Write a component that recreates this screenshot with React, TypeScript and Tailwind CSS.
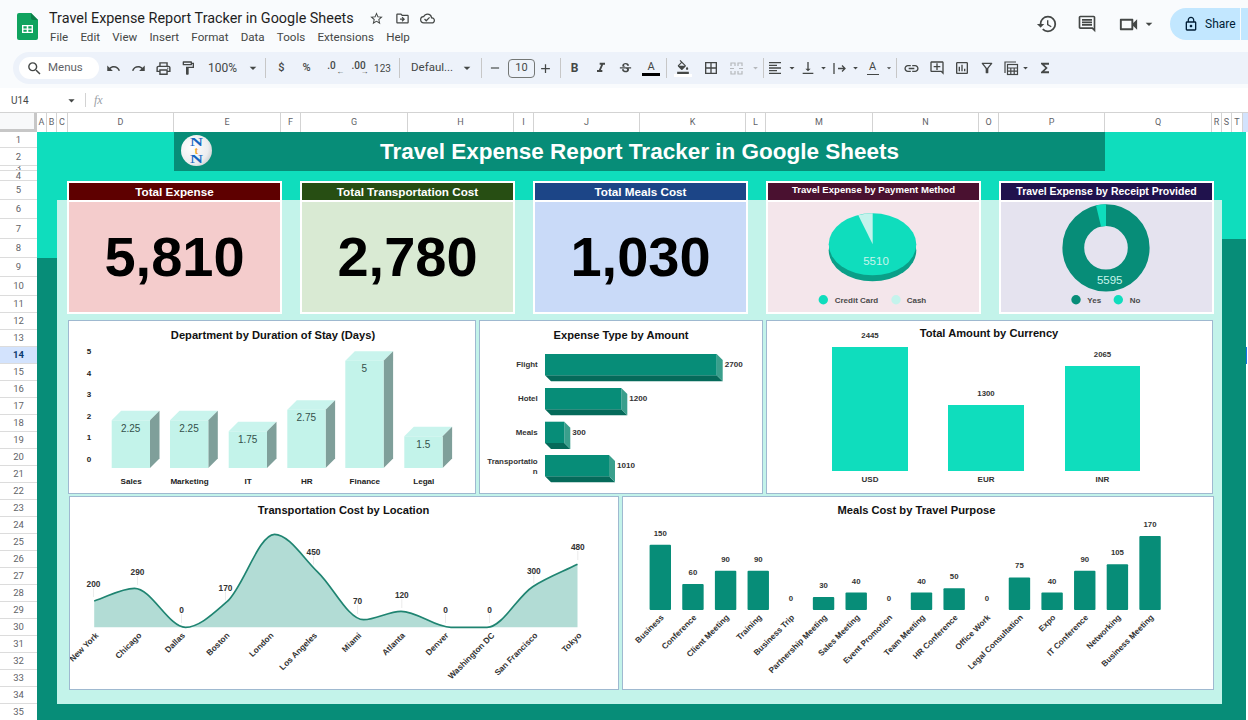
import React from 'react';
import {
  MdStarBorder, MdOutlineDriveFileMove, MdOutlineCloudDone, MdHistory, MdOutlineComment, MdOutlineVideocam,
  MdArrowDropDown, MdLockOutline, MdSearch, MdUndo, MdRedo, MdOutlinePrint, MdOutlineFormatPaint, MdRemove, MdAdd,
  MdFormatItalic, MdStrikethroughS, MdOutlineFormatColorFill, MdBorderAll, MdFormatAlignLeft, MdVerticalAlignBottom,
  MdLink, MdOutlineAddComment, MdOutlineInsertChart, MdOutlineFilterAlt, MdFunctions,
} from 'react-icons/md';

const MENUS = ['File', 'Edit', 'View', 'Insert', 'Format', 'Data', 'Tools', 'Extensions', 'Help'];

const COLUMNS: [string, number][] = [
  ['A', 10], ['B', 10], ['C', 11], ['D', 106], ['E', 107], ['F', 20], ['G', 107], ['H', 106], ['I', 20], ['J', 106],
  ['K', 106], ['L', 20], ['M', 107], ['N', 106], ['O', 20], ['P', 106], ['Q', 107], ['R', 10], ['S', 10], ['T', 11],
];

const ROW_HEIGHTS = [16, 18, 5, 10, 19, 19, 20, 19, 19, 19, 17, ...Array(24).fill(17)];

const KPIS = [
  { title: 'Total Expense', value: '5,810', head: 'bg-[#5e0000]', body: 'bg-[#f4cccc]' },
  { title: 'Total Transportation Cost', value: '2,780', head: 'bg-[#274e13]', body: 'bg-[#d9ead3]' },
  { title: 'Total Meals Cost', value: '1,030', head: 'bg-[#1c4587]', body: 'bg-[#c9daf8]' },
];

const STAY = [
  { name: 'Sales', label: '2.25', x: 111.7, top: 420.3 },
  { name: 'Marketing', label: '2.25', x: 170, top: 420.3 },
  { name: 'IT', label: '1.75', x: 228.7, top: 431.3 },
  { name: 'HR', label: '2.75', x: 287.3, top: 409.7 },
  { name: 'Finance', label: '5', x: 345.3, top: 360.7 },
  { name: 'Legal', label: '1.5', x: 404.3, top: 436.3 },
];

const EXPENSES = [
  { name: ['Flight'], value: 2700, right: 716.7, y: 354 },
  { name: ['Hotel'], value: 1200, right: 621.3, y: 388 },
  { name: ['Meals'], value: 300, right: 564.3, y: 421.7 },
  { name: ['Transportatio', 'n'], value: 1010, right: 609, y: 455 },
];

const CURRENCY = [
  { name: 'USD', value: 2445, x: 832, w: 76, top: 347 },
  { name: 'EUR', value: 1300, x: 948, w: 76, top: 405 },
  { name: 'INR', value: 2065, x: 1065, w: 75, top: 366 },
];

const LOCATIONS: { name: string; end: number; x: number; y: number; label?: string; lx?: number; ly?: number }[] = [
  { name: 'New York', end: 99, x: 94.2, y: 601, label: '200', lx: 93.5, ly: 584 },
  { name: 'Chicago', end: 142, x: 134.5, y: 588.3, label: '290', lx: 137.5, ly: 572 },
  { name: 'Dallas', end: 185.5, x: 185.5, y: 627.3, label: '0', lx: 181.5, ly: 610 },
  { name: 'Boston', end: 230, x: 227, y: 601.7, label: '170', lx: 225.5, ly: 587.5 },
  { name: 'London', end: 274, x: 274.5, y: 534.3 },
  { name: 'Los Angeles', end: 317.5, x: 318, y: 572.3, label: '450', lx: 313.5, ly: 551.5 },
  { name: 'Miami', end: 362, x: 363.6, y: 619.7, label: '70', lx: 357.5, ly: 601 },
  { name: 'Atlanta', end: 405.5, x: 401, y: 611.3, label: '120', lx: 401.8, ly: 595 },
  { name: 'Denver', end: 449, x: 451, y: 627.3, label: '0', lx: 445.5, ly: 610 },
  { name: 'Washington DC', end: 495, x: 487, y: 627.3, label: '0', lx: 489.5, ly: 610 },
  { name: 'San Francisco', end: 538, x: 532.7, y: 586.7, label: '300', lx: 533.8, ly: 570.5 },
  { name: 'Tokyo', end: 582, x: 577.5, y: 564.3, label: '480', lx: 577.8, ly: 547 },
];

const PURPOSES: [string, number][] = [
  ['Business', 150], ['Conference', 60], ['Client Meeting', 90], ['Training', 90], ['Business Trip', 0],
  ['Partnership Meeting', 30], ['Sales Meeting', 40], ['Event Promotion', 0], ['Team Meeting', 40], ['HR Conference', 50],
  ['Office Work', 0], ['Legal Consultation', 75], ['Expo', 40], ['IT Conference', 90], ['Networking', 105], ['Business Meeting', 170],
];

// monotone cubic through the points, flat at every peak and dip
function smoothPath(pts: { x: number; y: number }[]) {
  const m = pts.map((p, i) => {
    const prev = pts[i - 1];
    const next = pts[i + 1];
    if (!prev) return (next.y - p.y) / (next.x - p.x);
    if (!next) return (p.y - prev.y) / (p.x - prev.x);
    const a = (p.y - prev.y) / (p.x - prev.x);
    const b = (next.y - p.y) / (next.x - p.x);
    return a * b <= 0 ? 0 : (2 * a * b) / (a + b);
  });
  let d = 'M' + pts[0].x + ' ' + pts[0].y;
  for (let i = 0; i < pts.length - 1; i++) {
    const h = (pts[i + 1].x - pts[i].x) / 3;
    d += ' C' + (pts[i].x + h) + ' ' + (pts[i].y + m[i] * h) + ' ' + (pts[i + 1].x - h) + ' ' + (pts[i + 1].y - m[i + 1] * h) + ' ' + pts[i + 1].x + ' ' + pts[i + 1].y;
  }
  return d;
}

const Tool: React.FC<{ w?: string; children: React.ReactNode }> = ({ w = 'w-[25px]', children }) => (
  <div className={w + ' h-full shrink-0 flex items-center justify-center text-[#444746]'}>{children}</div>
);

const Sep = () => <div className="w-px h-[20px] bg-[#c7c7c7] shrink-0" />;

const Caret = ({ muted = false }: { muted?: boolean }) => (
  <MdArrowDropDown size={16} className={muted ? 'text-[#b5b8bb]' : 'text-[#444746]'} />
);

const Toolbar = () => (
  <div className="h-[36px] bg-[#f9fbfd] pl-[13px] shrink-0">
    <div className="h-[32px] bg-[#edf2fa] rounded-l-[16px] flex items-center pl-[6px] text-[#444746]">
      <div className="w-[80px] h-[22px] bg-white rounded-full flex items-center pl-[7px] shrink-0">
        <MdSearch size={17} />
        <span className="ml-[5px] text-[11.5px] text-[#5f6368]">Menus</span>
      </div>
      <div className="w-[1.5px] shrink-0" />
      <Tool><MdUndo size={15} /></Tool>
      <Tool><MdRedo size={15} /></Tool>
      <Tool><MdOutlinePrint size={17} /></Tool>
      <Tool><MdOutlineFormatPaint size={16} /></Tool>
      <span className="ml-[7.5px] w-[36px] text-[12px] shrink-0">100%</span>
      <Tool w="w-[17px]"><Caret /></Tool>
      <div className="w-[4px] shrink-0" />
      <Sep />
      <Tool w="w-[31px]"><span className="text-[11px] font-medium">$</span></Tool>
      <Tool w="w-[19px]"><span className="text-[11px] font-medium">%</span></Tool>
      <Tool w="w-[31px]">
        <span className="relative text-[10px] font-medium leading-none -mt-[4px]">.0
          <span className="absolute left-[9px] top-[7px] text-[8px]">←</span>
        </span>
      </Tool>
      <Tool w="w-[23px]">
        <span className="relative text-[10px] font-medium leading-none -mt-[4px]">.00
          <span className="absolute left-[9px] top-[7px] text-[8px]">→</span>
        </span>
      </Tool>
      <Tool w="w-[25px]"><span className="text-[10px]">123</span></Tool>
      <div className="w-[4px] shrink-0" />
      <Sep />
      <span className="ml-[11px] w-[48px] text-[11.5px] shrink-0">Defaul...</span>
      <Tool w="w-[16px]"><Caret /></Tool>
      <div className="w-[6px] shrink-0" />
      <Sep />
      <Tool w="w-[26px]"><MdRemove size={14} /></Tool>
      <div className="w-[27px] h-[19px] rounded-[4px] border border-[#747775] flex items-center justify-center text-[11px] shrink-0">10</div>
      <Tool w="w-[21px]"><MdAdd size={15} /></Tool>
      <div className="w-[4px] shrink-0" />
      <Sep />
      <Tool w="w-[27px]"><span className="text-[12px] font-bold">B</span></Tool>
      <Tool w="w-[25px]"><MdFormatItalic size={16} /></Tool>
      <Tool w="w-[25px]"><MdStrikethroughS size={15} /></Tool>
      <Tool w="w-[26px]">
        <div className="flex flex-col items-center">
          <span className="text-[11px] leading-[11px]">A</span>
          <div className="w-[18px] h-[3px] bg-black mt-px" />
        </div>
      </Tool>
      <div className="w-[2px] shrink-0" />
      <Sep />
      <Tool w="w-[32px]">
        <div className="flex flex-col items-center">
          <MdOutlineFormatColorFill size={14} />
          <div className="w-[18px] h-[3px] bg-white" />
        </div>
      </Tool>
      <Tool w="w-[24px]"><MdBorderAll size={16} /></Tool>
      <Tool w="w-[27px]">
        <svg width="15" height="15" viewBox="0 0 15 15" fill="none" stroke="#b5b8bb" strokeWidth="1.2">
          <path d="M2 5V2h4v3M9 5V2h4v3M2 10v3h4v-3M9 10v3h4v-3M1 7.5h4M14 7.5h-4" />
        </svg>
      </Tool>
      <Tool w="w-[11px]"><Caret muted /></Tool>
      <div className="w-[2px] shrink-0" />
      <Sep />
      <Tool w="w-[22px]"><MdFormatAlignLeft size={16} /></Tool>
      <Tool w="w-[12px]"><Caret /></Tool>
      <Tool w="w-[20px]"><MdVerticalAlignBottom size={16} /></Tool>
      <Tool w="w-[11px]"><Caret /></Tool>
      <Tool w="w-[21px]">
        <svg width="15" height="15" viewBox="0 0 15 15" fill="none" stroke="#444746" strokeWidth="1.3">
          <path d="M2 2v11M6 7.5h7M10 4.5l3 3-3 3" />
        </svg>
      </Tool>
      <Tool w="w-[11px]"><Caret /></Tool>
      <Tool w="w-[23px]">
        <div className="flex flex-col items-center">
          <span className="text-[11px] leading-[11px]">A</span>
          <div className="w-[12px] h-px bg-[#444746] mt-[2px]" />
        </div>
      </Tool>
      <Tool w="w-[10px]"><Caret /></Tool>
      <div className="w-[2px] shrink-0" />
      <Sep />
      <Tool w="w-[28px]"><MdLink size={17} /></Tool>
      <Tool w="w-[24px]"><MdOutlineAddComment size={16} /></Tool>
      <Tool w="w-[25px]"><MdOutlineInsertChart size={16} /></Tool>
      <Tool w="w-[25px]"><MdOutlineFilterAlt size={16} /></Tool>
      <Tool w="w-[24px]">
        <svg width="16" height="16" viewBox="0 0 16 16" fill="none" stroke="#444746" strokeWidth="1.2">
          <path d="M2 13V2h11" />
          <rect x="4.5" y="4.5" width="10" height="10" />
          <path d="M4.5 8h10M4.5 11.2h10M7.8 8v6.5M11.2 8v6.5" />
        </svg>
      </Tool>
      <div className="-ml-[3.5px] w-[11px] h-full shrink-0 flex items-center justify-center"><Caret /></div>
      <Tool w="w-[29px]"><MdFunctions size={16} /></Tool>
    </div>
  </div>
);

const TopBar = () => (
  <div className="h-[52px] bg-[#f9fbfd] flex shrink-0 text-[#1f1f1f]">
    <svg className="ml-[17px] mt-[13px] shrink-0" width="21" height="27" viewBox="0 0 21 27">
      <path d="M2 0h12l7 7v18a2 2 0 0 1-2 2H2a2 2 0 0 1-2-2V2a2 2 0 0 1 2-2z" fill="#10a35f" />
      <path d="M14 0l7 7h-5a2 2 0 0 1-2-2z" fill="#0b7f49" />
      <path d="M5 12h11v8H5z" fill="#fff" />
      <path d="M6.4 13.3h3.3v2.1H6.4zM11.3 13.3h3.3v2.1h-3.3zM6.4 16.8h3.3v2h-3.3zM11.3 16.8h3.3v2h-3.3z" fill="#10a35f" />
    </svg>
    <div className="ml-[11px] pt-[9px]">
      <div className="flex items-center h-[19px]">
        <span className="text-[14.4px] w-[320px] whitespace-nowrap">Travel Expense Report Tracker in Google Sheets</span>
        <MdStarBorder size={15} className="text-[#444746]" />
        <MdOutlineDriveFileMove size={15} className="text-[#444746] ml-[11px]" />
        <MdOutlineCloudDone size={15} className="text-[#444746] ml-[10px]" />
      </div>
      <div className="flex gap-[12.2px] mt-[2px] ml-px text-[11.6px] leading-[15px] text-[#444746]">
        {MENUS.map(m => <span key={m}>{m}</span>)}
      </div>
    </div>
    <div className="ml-auto flex items-center h-[48px] text-[#444746]">
      <MdHistory size={22} />
      <MdOutlineComment size={20} className="ml-[19px]" />
      <MdOutlineVideocam size={23} className="ml-[20px]" />
      <MdArrowDropDown size={16} className="ml-[1px]" />
      <div className="ml-[13px] w-[78px] h-[32px] bg-[#c2e7ff] rounded-l-full flex items-center pl-[13px] text-[#001d35]">
        <MdLockOutline size={16} />
        <span className="ml-[6px] w-[35px] text-[12px]">Share</span>
        <div className="w-px h-full bg-[#f9fbfd]" />
      </div>
    </div>
  </div>
);

const FormulaBar = () => (
  <div className="h-[25px] bg-white border-b border-[#d3d3d3] flex items-center shrink-0 text-[#444746]">
    <span className="ml-[11px] w-[53px] text-[10px]">U14</span>
    <MdArrowDropDown size={15} />
    <div className="ml-[6px] w-px h-[14px] bg-[#d3d3d3]" />
    <span className="ml-[8px] text-[12px] italic font-['Liberation_Serif',serif] text-[#9aa0a6]">fx</span>
  </div>
);

const ColumnHeader = () => (
  <div className="h-[19px] flex bg-white shrink-0">
    <div className="w-[37px] shrink-0 bg-[#f8f9fa] border-r-[3px] border-b-[3px] border-[#c7c7c7]" />
    {COLUMNS.map(([name, w]) => (
      <div key={name} style={{ width: w }} className="shrink-0 border-r border-[#d3d3d3] flex items-center justify-center text-[9px] text-[#5f6368]">
        {name}
      </div>
    ))}
    <div className="flex-1 bg-[#d3e3fd]" />
  </div>
);

const RowHeader = () => (
  <div className="w-[37px] shrink-0 bg-white overflow-hidden">
    {ROW_HEIGHTS.map((h, i) => (
      <div
        key={i}
        style={{ height: h }}
        className={'overflow-hidden border-b border-[#dcdcdc] flex items-center justify-center text-[9.5px] leading-[10px] ' + (i === 13 ? 'bg-[#d3e3fd] font-bold text-[#0b3a6e]' : 'text-[#5f6368]')}
      >
        {i + 1}
      </div>
    ))}
  </div>
);

const Logo = () => (
  <svg className="absolute left-[7px] top-[3px]" width="31" height="31" viewBox="0 0 31 31">
    <defs>
      <radialGradient id="ball" cx="0.35" cy="0.4" r="0.75">
        <stop offset="0" stopColor="#ffffff" />
        <stop offset="0.7" stopColor="#ecedef" />
        <stop offset="1" stopColor="#c6c9cc" />
      </radialGradient>
    </defs>
    <circle cx="15.5" cy="15.5" r="15.5" fill="url(#ball)" />
    <g fontFamily="'Liberation Serif', serif" fontWeight="700" textAnchor="middle">
      <text x="15.5" y="11" fontSize="11.5" fill="#1565c0" textLength="13" lengthAdjust="spacingAndGlyphs">N</text>
      <text x="15.5" y="19" fontSize="10" fill="#f5a623">t</text>
      <text x="15.5" y="28" fontSize="11.5" fill="#1565c0" textLength="13" lengthAdjust="spacingAndGlyphs">N</text>
    </g>
  </svg>
);

const KpiCard: React.FC<{ title: string; value: string; head: string; body: string }> = ({ title, value, head, body }) => (
  <div className="w-[215px] h-[133px] border-2 border-white flex flex-col shrink-0">
    <div className={head + ' h-[17px] flex items-center justify-center text-white text-[11.7px] font-bold shrink-0'}>{title}</div>
    <div className={body + ' flex-1 border-t-2 border-white flex items-center justify-center text-black text-[56px] font-bold'}>{value}</div>
  </div>
);

const ChartCard: React.FC<{ w: string; h: string; viewBox: string; children: React.ReactNode }> = ({ w, h, viewBox, children }) => (
  <div className={w + ' ' + h + ' bg-white border border-[#9fb9d0] shrink-0'}>
    <svg className="w-full h-full block" viewBox={viewBox} fontFamily="'Liberation Sans', Arial, sans-serif">
      {children}
    </svg>
  </div>
);

const PaymentCard = () => (
  <div className="w-[215px] h-[133px] border-2 border-white flex flex-col shrink-0">
    <div className="h-[17px] bg-[#4a1130] flex items-center justify-center text-white text-[9.6px] font-bold shrink-0 pb-[2px]">Travel Expense by Payment Method</div>
    <div className="flex-1 bg-[#f4e6eb] border-t-2 border-white">
      <svg className="w-full h-full block" viewBox="767 202 211 110" fontFamily="'Liberation Sans', Arial, sans-serif">
        <ellipse cx="871.5" cy="250.3" rx="43.8" ry="31" fill="#0a9f88" />
        <ellipse cx="871.5" cy="244.3" rx="43.8" ry="31" fill="#0fddbd" />
        <path d="M871.7 244.3 L871.7 213.3 A43.8 31 0 0 0 857.3 215.2 Z" fill="#c4f3ec" />
        <text x="875" y="264.5" fontSize="11.5" textAnchor="middle" fill="#c8f5ec">5510</text>
        <circle cx="822.3" cy="299.7" r="4.7" fill="#0fddbd" />
        <text x="833.7" y="302.7" fontSize="8" fontWeight="700" fill="#4a4a4a">Credit Card</text>
        <circle cx="895" cy="299.7" r="4.7" fill="#c4f3ec" />
        <text x="905.7" y="302.7" fontSize="8" fontWeight="700" fill="#4a4a4a">Cash</text>
      </svg>
    </div>
  </div>
);

const ReceiptCard = () => (
  <div className="w-[215px] h-[133px] border-2 border-white flex flex-col shrink-0">
    <div className="h-[17px] bg-[#20124d] flex items-center justify-center text-white text-[10.5px] font-bold shrink-0">Travel Expense by Receipt Provided</div>
    <div className="flex-1 bg-[#e5e3ef] border-t-2 border-white">
      <svg className="w-full h-full block" viewBox="1000 202 211 110" fontFamily="'Liberation Sans', Arial, sans-serif">
        <circle cx="1105" cy="247.8" r="32.7" fill="none" stroke="#078d78" strokeWidth="21.8" />
        <path d="M1105 204.2 A43.6 43.6 0 0 0 1095 205.4 L1100 226.6 A21.8 21.8 0 0 1 1105 226 Z" fill="#0fddbd" />
        <text x="1108.7" y="283.5" fontSize="11.5" textAnchor="middle" fill="#c8f5ec">5595</text>
        <circle cx="1075" cy="299.7" r="4.7" fill="#078d78" />
        <text x="1086.3" y="302.7" fontSize="8" fontWeight="700" fill="#4a4a4a">Yes</text>
        <circle cx="1117.3" cy="299.7" r="4.7" fill="#0fddbd" />
        <text x="1128.7" y="302.7" fontSize="8" fontWeight="700" fill="#4a4a4a">No</text>
      </svg>
    </div>
  </div>
);

const StayChart = () => (
  <ChartCard w="w-[408px]" h="h-[174px]" viewBox="69 321 406 172">
    <text x="273" y="339" fontSize="11.15" fontWeight="700" textAnchor="middle" fill="#111">Department by Duration of Stay (Days)</text>
    {[5, 4, 3, 2, 1, 0].map((n, i) => (
      <text key={n} x="89" y={354 + i * 21.5} fontSize="8" fontWeight="700" textAnchor="middle" fill="#222">{n}</text>
    ))}
    {STAY.map(b => (
      <g key={b.name}>
        <path d={'M' + b.x + ' ' + b.top + 'l9.5 -9.5h38.3l-9.5 9.5z'} fill="#c9f4ed" />
        <path d={'M' + (b.x + 38.3) + ' ' + b.top + 'l9.5 -9.5V458.5l-9.5 9.5z'} fill="#7f9f9a" />
        <rect x={b.x} y={b.top} width="38.3" height={468 - b.top} fill="#c3f3ea" />
        <text x={b.x + 19} y={b.top + 11.5} fontSize="10" textAnchor="middle" fill="#34504b">{b.label}</text>
        <text x={b.x + 19.5} y="484" fontSize="8.1" fontWeight="700" textAnchor="middle" fill="#222">{b.name}</text>
      </g>
    ))}
  </ChartCard>
);

const ExpenseChart = () => (
  <ChartCard w="w-[284px]" h="h-[174px]" viewBox="480 321 282 172">
    <text x="621" y="338.5" fontSize="11.15" fontWeight="700" textAnchor="middle" fill="#111">Expense Type by Amount</text>
    {EXPENSES.map(b => (
      <g key={b.value}>
        <path d={'M545 ' + (b.y + 21.3) + 'l6 6H' + (b.right + 6) + 'l-6 -6z'} fill="#056a5a" />
        <path d={'M' + b.right + ' ' + b.y + 'l6 6V' + (b.y + 27.3) + 'l-6 -6z'} fill="#3a9f8c" />
        <rect x="545" y={b.y} width={b.right - 545} height="21.3" fill="#078d78" />
        <text x={b.right + 8} y={b.y + 13} fontSize="8.1" fontWeight="700" fill="#333">{b.value}</text>
        {b.name.map((line, i) => (
          <text key={line} x="537.7" y={b.y + (b.name.length > 1 ? 9 : 13) + i * 9.5} fontSize="7.9" fontWeight="700" textAnchor="end" fill="#333">{line}</text>
        ))}
      </g>
    ))}
  </ChartCard>
);

const CurrencyChart = () => (
  <ChartCard w="w-[447px]" h="h-[174px]" viewBox="767 321 445 172">
    <text x="989" y="337" fontSize="11.15" fontWeight="700" textAnchor="middle" fill="#111">Total Amount by Currency</text>
    {CURRENCY.map(b => (
      <g key={b.name}>
        <rect x={b.x} y={b.top} width={b.w} height={471 - b.top} fill="#0fddbd" />
        <text x={b.x + b.w / 2} y={b.top - 9} fontSize="7.8" fontWeight="700" textAnchor="middle" fill="#333">{b.value}</text>
        <text x={b.x + b.w / 2} y="482" fontSize="8" fontWeight="700" textAnchor="middle" fill="#333">{b.name}</text>
      </g>
    ))}
  </ChartCard>
);

const TransportChart = () => {
  const line = smoothPath(LOCATIONS);
  return (
    <ChartCard w="w-[550px]" h="h-[194px]" viewBox="70 497 548 192">
      <text x="343.6" y="514" fontSize="11.15" fontWeight="700" textAnchor="middle" fill="#111">Transportation Cost by Location</text>
      <path d={line + ' L577.5 627.3 L94.2 627.3 Z'} fill="#b2dcd5" />
      <path d={line} fill="none" stroke="#1f8471" strokeWidth="1.7" />
      {LOCATIONS.map(p => (
        <g key={p.name}>
          {p.label && (
            <>
              <line x1={p.lx} x2={p.lx} y1={(p.ly as number) + 4} y2={(p.ly as number) + 13} stroke="#e4e4e4" strokeWidth="0.7" />
              <text x={p.lx} y={(p.ly as number) + 3} fontSize="8.3" fontWeight="700" textAnchor="middle" fill="#333">{p.label}</text>
            </>
          )}
          <text x={p.end} y="636" fontSize="8.3" fontWeight="700" textAnchor="end" fill="#333" transform={'rotate(-45 ' + p.end + ' 636)'}>{p.name}</text>
        </g>
      ))}
    </ChartCard>
  );
};

const MealsChart = () => (
  <ChartCard w="w-[592px]" h="h-[194px]" viewBox="623 497 590 192">
    <text x="916.4" y="514" fontSize="11.15" fontWeight="700" textAnchor="middle" fill="#111">Meals Cost by Travel Purpose</text>
    {PURPOSES.map(([name, value], i) => {
      const cx = 660.3 + i * 32.65;
      const h = value * 0.435;
      return (
        <g key={name}>
          {value > 0 && <rect x={cx - 10.7} y={610 - h} width="21.4" height={h} rx="1" fill="#078d78" />}
          <text x={cx} y={610 - h - 9} fontSize="7.8" fontWeight="700" textAnchor="middle" fill="#333">{value}</text>
          <text x={cx + 4} y="618" fontSize="8.2" fontWeight="700" textAnchor="end" fill="#333" transform={'rotate(-45 ' + (cx + 4) + ' 618)'}>{name}</text>
        </g>
      );
    })}
  </ChartCard>
);

const App: React.FC = () => {
  return (
    <div className="w-[1248px] h-[720px] overflow-hidden bg-white flex flex-col font-['Roboto',sans-serif]">
      <TopBar />
      <Toolbar />
      <FormulaBar />
      <ColumnHeader />

      <div className="flex flex-1 min-h-0">
        <RowHeader />

        {/* dashboard painted on the sheet cells */}
        <div className="relative w-[1209px] bg-[#0fddbd] overflow-hidden font-['Liberation_Sans',Arial,sans-serif]">
          <div className="absolute left-0 right-0 bottom-0 h-[16px] bg-[#078d78]" />
          <div className="absolute left-0 top-[126px] bottom-0 w-[20px] bg-[#078d78]" />
          <div className="absolute right-0 top-[107px] bottom-0 w-[24px] bg-[#078d78]" />
          <div className="absolute left-[20px] top-[68px] w-[1165px] h-[504px] bg-[#c3f3ea]" />

          <div className="relative">
            <div className="relative ml-[137px] w-[931px] h-[39px] bg-[#078d78] flex items-center justify-center text-white text-[22.5px] font-bold">
              <Logo />
              Travel Expense Report Tracker in Google Sheets
            </div>

            <div className="mt-[10px] ml-[30px] flex gap-[18px]">
              {KPIS.map(k => <KpiCard key={k.title} {...k} />)}
              <PaymentCard />
              <ReceiptCard />
            </div>

            <div className="mt-[6px] ml-[31px] flex gap-[3px]">
              <StayChart />
              <ExpenseChart />
              <CurrencyChart />
            </div>

            <div className="mt-[2px] ml-[32px] flex gap-[3px]">
              <TransportChart />
              <MealsChart />
            </div>
          </div>
        </div>

        <div className="flex-1 bg-white">
          <div className="mt-[215px] h-[17px] w-[1px] bg-[#1a73e8]" />
        </div>
      </div>
    </div>
  );
};

export default App;
